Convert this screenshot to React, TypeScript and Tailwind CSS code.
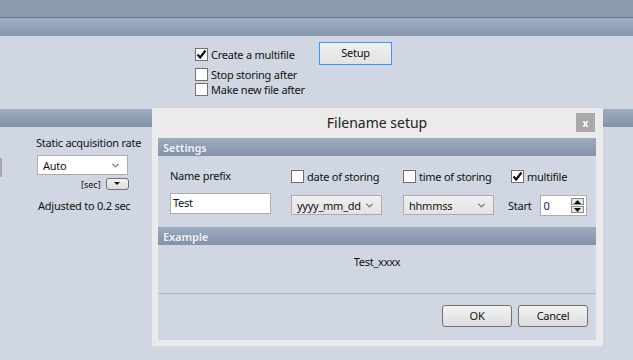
import { ChevronDown } from 'lucide-react';

const font = { fontFamily: '"Noto Sans", "Open Sans", sans-serif' };
const txt = 'text-[11px] tracking-[-0.25px] text-[#111]';

function Check({ checked = false }: { checked?: boolean }) {
  return (
    <span className="w-[13px] h-[13px] bg-white border border-[#707070] flex items-center justify-center shrink-0">
      {checked && (
        <svg width="11" height="11" viewBox="0 0 11 11">
          <path d="M1.5 5.5 L4.2 8.5 L9.5 1.5" stroke="#111" strokeWidth="2.2" fill="none" />
        </svg>
      )}
    </span>
  );
}

function CheckRow({ label, checked = false }: { label: string; checked?: boolean }) {
  return (
    <div className="flex items-center gap-[3px] h-[14px]">
      <Check checked={checked} />
      <span className={`${txt} leading-none`}>{label}</span>
    </div>
  );
}

function Select({ value, width, white = false }: { value: string; width: string; white?: boolean }) {
  return (
    <div
      className={`${width} h-[20px] border border-[#acacac] flex items-center justify-between pl-[5px] pr-[6px] ${
        white ? 'bg-white' : 'bg-gradient-to-b from-[#f0f0f0] to-[#e3e3e3]'
      }`}
    >
      <span className={`${txt} leading-none`}>{value}</span>
      <ChevronDown size={11} strokeWidth={3} color="#7a7a7a" />
    </div>
  );
}

function Header({ title }: { title: string }) {
  return (
    <div className="h-[18px] bg-gradient-to-b from-[#9eacc1] to-[#8593aa] flex items-center pl-[5px]">
      <span className="text-[11px] font-bold tracking-[-0.2px] text-[#eef1f6] leading-none" style={{ textShadow: '0 0 1px #5a6478' }}>
        {title}
      </span>
    </div>
  );
}

function Btn({ label }: { label: string }) {
  return (
    <div className={`w-[70px] h-[22px] rounded-[3px] border border-[#707070] bg-gradient-to-b from-[#f4f4f4] to-[#dcdcdc] flex items-center justify-center ${txt}`}>
      {label}
    </div>
  );
}

export default function App() {
  return (
    <div className="relative w-[633px] h-[360px] overflow-hidden bg-[#d0d7e2]" style={font}>
      {/* top bars */}
      <div className="h-[17px] bg-[#8d9bb1]" />
      <div className="h-px bg-[#66758c]" />
      <div className="h-[18px] bg-gradient-to-b from-[#a0aec3] to-[#8696ad]" />

      {/* multifile options */}
      <div className="h-[73px] flex items-start pl-[195px] pt-[6px]">
        <div className="w-[124px] flex flex-col pt-[5px]">
          <CheckRow label="Create a multifile" checked />
          <div className="h-[6px]" />
          <CheckRow label="Stop storing after" />
          <div className="h-px" />
          <CheckRow label="Make new file after" />
        </div>
        <div className={`w-[73px] h-[23px] border border-[#3399ff] bg-gradient-to-b from-[#f0f0f0] to-[#e2e2e2] flex items-center justify-center ${txt}`}>
          Setup
        </div>
      </div>

      {/* lower band */}
      <div className="h-[18px] bg-gradient-to-b from-[#9eacc1] to-[#8593aa]" />

      {/* left acquisition panel */}
      <div className="flex">
        <div className="w-[2px] h-[19px] mt-[31px] bg-[#a9a9a9]" />
        <div className="ml-[34px] flex flex-col pt-[8px]">
          <span className={`${txt} leading-[16px]`}>Static acquisition rate</span>
          <div className="mt-[4px] ml-px">
            <Select value="Auto" width="w-[91px]" white />
          </div>
          <div className="mt-[3px] ml-[45px] flex items-center gap-[5px]">
            <span className="text-[9px] text-[#111] leading-none">[sec]</span>
            <div className="w-[23px] h-[12px] rounded-[3px] border border-[#707070] bg-gradient-to-b from-[#f4f4f4] to-[#dcdcdc] flex items-center justify-center">
              <svg width="6" height="4" viewBox="0 0 6 4">
                <path d="M0 0 H6 L3 3 Z" fill="#111" />
              </svg>
            </div>
          </div>
          <span className={`mt-[8px] ml-[2px] ${txt} leading-[16px]`}>Adjusted to 0.2 sec</span>
        </div>
      </div>

      {/* Filename setup dialog */}
      <div className="absolute left-[152px] top-[108px] w-[451px] h-[238px] bg-[#ebebeb] flex flex-col px-[6px] pr-[7px] pb-[6px]">
        <div className="h-[30px] relative flex items-center justify-center">
          <span className="text-[14px] text-[#222] leading-none">Filename setup</span>
          <div className="absolute right-[1px] top-[5px] w-[19px] h-[19px] bg-[#a9a9a9] flex items-center justify-center">
            <span className="text-[10px] font-bold text-white leading-none">x</span>
          </div>
        </div>
        <div className="flex-1 bg-[#d0d7e2] flex flex-col">
          <Header title="Settings" />
          <div className="h-[71px] flex pl-[12px] pt-[13px]">
            <div className="w-[121px] flex flex-col">
              <span className={`h-[14px] mt-px ${txt} leading-none`}>Name prefix</span>
              <div className={`mt-[9px] w-[101px] h-[21px] bg-white border border-[#acacac] flex items-center pl-[2px] ${txt}`}>
                Test
              </div>
            </div>
            <div className="w-[112px] flex flex-col">
              <CheckRow label="date of storing" />
              <div className="mt-[12px]">
                <Select value="yyyy_mm_dd" width="w-[91px]" />
              </div>
            </div>
            <div className="w-[105px] flex flex-col">
              <CheckRow label="time of storing" />
              <div className="mt-[12px]">
                <Select value="hhmmss" width="w-[91px]" />
              </div>
            </div>
            <div className="flex flex-col">
              <div className="ml-[3px]">
                <CheckRow label="multifile" checked />
              </div>
              <div className="mt-[12px] flex items-center gap-[9px]">
                <span className={`${txt} leading-none`}>Start</span>
                <div className="w-[47px] h-[21px] bg-white border border-[#acacac] flex items-center justify-between pl-[2px] pr-[2px]">
                  <span className="text-[11px] text-[#1a1a6a] leading-none">0</span>
                  <div className="flex flex-col gap-px">
                    <div className="w-[13px] h-[7px] border border-[#8a8a8a] bg-[#e6e6e6] flex items-center justify-center">
                      <svg width="7" height="4" viewBox="0 0 7 4">
                        <path d="M0 4 H7 L3.5 0 Z" fill="#111" />
                      </svg>
                    </div>
                    <div className="w-[13px] h-[7px] border border-[#8a8a8a] bg-[#e6e6e6] flex items-center justify-center">
                      <svg width="7" height="4" viewBox="0 0 7 4">
                        <path d="M0 0 H7 L3.5 4 Z" fill="#111" />
                      </svg>
                    </div>
                  </div>
                </div>
              </div>
            </div>
          </div>
          <Header title="Example" />
          <div className="h-[48px] flex justify-center pt-[11px]">
            <span className={`${txt} leading-none`}>Test_xxxx</span>
          </div>
          <div className="h-px bg-[#b0b5c0]" />
          <div className="flex-1 flex justify-end items-start gap-[6px] pt-[11px] pr-[8px]">
            <Btn label="OK" />
            <Btn label="Cancel" />
          </div>
        </div>
      </div>
    </div>
  );
}
